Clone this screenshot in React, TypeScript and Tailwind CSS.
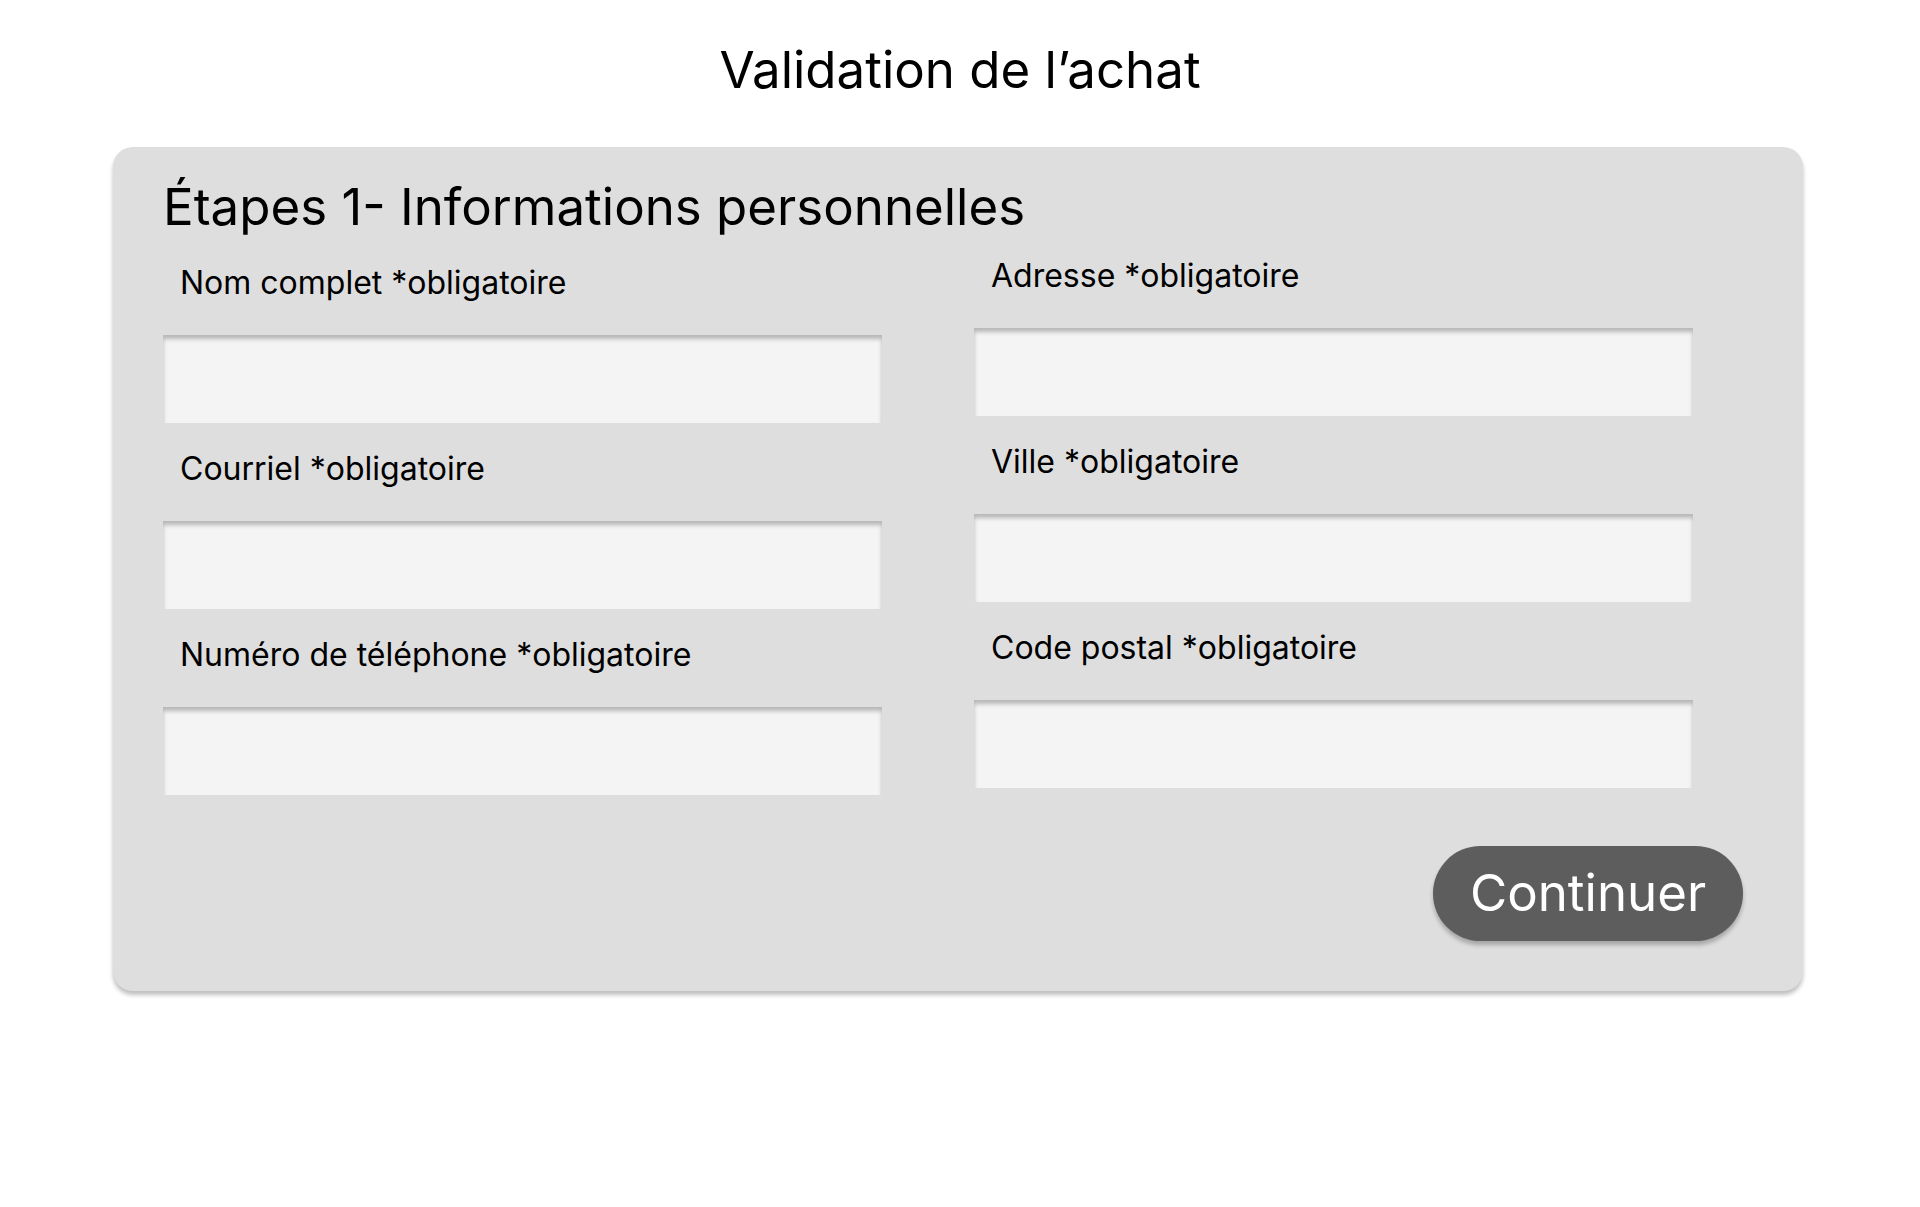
import React from "react";

const LEFT = ["Nom complet *obligatoire", "Courriel *obligatoire", "Numéro de téléphone *obligatoire"];
const RIGHT = ["Adresse *obligatoire", "Ville *obligatoire", "Code postal *obligatoire"];

function Field({ label, first }: { label: string; first?: boolean }) {
  return (
    <div className={first ? "flex flex-col" : "mt-[27px] flex flex-col"}>
      <label className="pl-[17px] text-[32px] leading-[38px] text-black">{label}</label>
      <input
        type="text"
        className="mt-[33px] h-[88px] w-[719px] bg-[#f4f4f4] shadow-[inset_0_4px_4px_rgba(0,0,0,0.25)] outline-none"
      />
    </div>
  );
}

export default function App() {
  return (
    <div
      className="min-h-screen w-full bg-white pt-[40px]"
      style={{ fontFamily: "Inter, 'Noto Sans', sans-serif" }}
    >
      <h1 className="text-center text-[51px] leading-[60px] font-normal text-black">Validation de l’achat</h1>

      <div className="ml-[113px] mr-[117px] mt-[47px] rounded-[20px] bg-[#dedede] pt-[30px] pb-[50px] pl-[50px] pr-[60px] shadow-[0_4px_4px_rgba(0,0,0,0.25)]">
        <h2 className="text-[51px] leading-[60px] font-normal text-black">Étapes 1- Informations personnelles</h2>

        <div className="flex items-start gap-[92px]">
          <div className="mt-[27px] flex flex-col">
            {LEFT.map((l, i) => (
              <Field key={l} label={l} first={i === 0} />
            ))}
          </div>
          <div className="mt-[20px] flex flex-col">
            {RIGHT.map((l, i) => (
              <Field key={l} label={l} first={i === 0} />
            ))}
          </div>
        </div>

        <div className="mt-[51px] flex justify-end">
          <button className="flex h-[95px] w-[310px] items-center justify-center rounded-full bg-[#5d5d5d] text-[51px] text-white shadow-[0_4px_4px_rgba(0,0,0,0.25)]">
            Continuer
          </button>
        </div>
      </div>
    </div>
  );
}
